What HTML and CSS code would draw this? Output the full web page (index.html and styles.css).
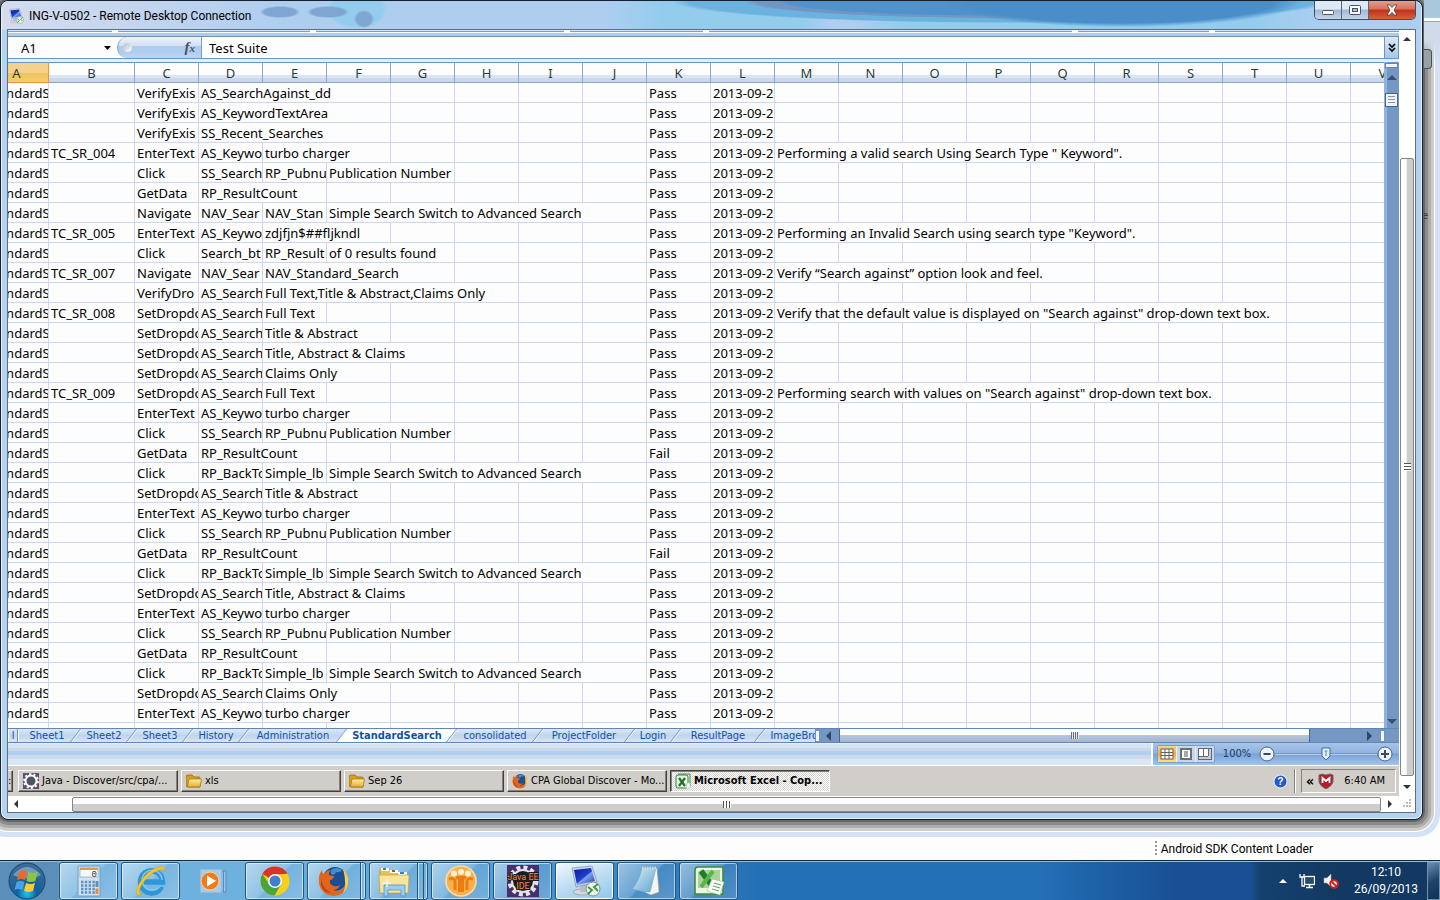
FILE: index.html
```html
<!DOCTYPE html>
<html lang="en">
<head>
<meta charset="utf-8">
<title>ING-V-0502 - Remote Desktop Connection</title>
<link rel="stylesheet" href="styles.css">
</head>
<body>
<svg class="defs" aria-hidden="true">
  <defs>
    <linearGradient id="gFolder" x1="0" y1="0" x2="0" y2="1"><stop offset="0" stop-color="#fff3a8"/><stop offset="1" stop-color="#e3ac2c"/></linearGradient>
    <radialGradient id="gOrb" cx=".5" cy=".85" r=".8"><stop offset="0" stop-color="#18c8f8"/><stop offset=".35" stop-color="#12609c"/><stop offset="1" stop-color="#3c6c98"/></radialGradient>
    <linearGradient id="gScreen" x1="0" y1="0" x2="1" y2="1"><stop offset="0" stop-color="#0a1a9c"/><stop offset=".5" stop-color="#1f3fd0"/><stop offset=".55" stop-color="#7fa4ee"/><stop offset="1" stop-color="#1838b8"/></linearGradient>
    <linearGradient id="gPad" x1="0" y1="0" x2="1" y2="1"><stop offset="0" stop-color="#d8eef8"/><stop offset="1" stop-color="#5fa6cf"/></linearGradient>
  </defs>
  <symbol id="folder" viewBox="0 0 16 16"><path d="M0 4q0-2 2-2h4l2 2h5q1 0 1 1v9H2q-2 0-2-2z" fill="#d9a01f" stroke="#8f6a10" stroke-width=".8"/><path d="M3 6h12.500l-1.500 8H1.500z" fill="url(#gFolder)" stroke="#a87b14" stroke-width=".8"/></symbol>
  <symbol id="firefox" viewBox="0 0 32 32"><circle cx="17" cy="14" r="12" fill="#1d4e93"/><path d="M13 5q6-4 11 0q-2 3-6 2q-1 4-5 2z" fill="#3f8fd0"/><path d="M25 4q6 6 5 14q-2 12-14 13Q3 30 1 18Q0 10 4 5q0 3 2 4q3-4 7-4q-3 3-2 5q2 1 5 1q0 3-4 4q-1 5 4 6q3 1 6-1q-2 5-7 5q7 3 11-3q3-6-1-18z" fill="#e2661a"/><path d="M25 4q6 6 5 14q-1 7-5 10q3-6 2-12q0-6-2-12z" fill="#fbd04a"/><path d="M3 11q0 12 10 17q-8-1-10-8z" fill="#c43a12"/></symbol>
  <symbol id="rdp" viewBox="0 0 32 32"><ellipse cx="14" cy="27" rx="10" ry="3" fill="#d5d8da" stroke="#8b9299" stroke-width=".6"/><path d="M12 20h7l1 7h-9z" fill="#b7bec6"/><path d="M3 3l20-2l5 16l-21 5z" fill="#c9d6e6" stroke="#75879b" stroke-width=".6"/><path d="M5 5l17-2l4 13l-18 4z" fill="url(#gScreen)"/><circle cx="24" cy="24" r="7" fill="#eef2ee" stroke="#85908a"/><path d="M19 22l4 3l-4 4M29 19l-4 3l4 4" fill="none" stroke="#2f9c3c" stroke-width="1.800"/></symbol>
</svg>

<main class="desktop">
  <div class="back-window">
    <div class="back-body"></div>
    <footer class="loader"><span class="grip"></span><span>Android SDK Content Loader</span></footer>
  </div>
  <div class="back-edge"><span class="back-tab"></span><span class="back-link">le</span></div>

  <section class="rdp" aria-label="Remote Desktop Connection">
    <header class="titlebar">
      <svg class="title-icon"><use href="#rdp"/></svg>
      <h1>ING-V-0502 - Remote Desktop Connection</h1>
      <div class="win-buttons">
        <button class="wb min" aria-label="Minimize"><svg viewBox="0 0 12 12"><rect x=".5" y="6.500" width="11" height="4" rx="1" fill="#fff" stroke="#44546c"/></svg></button>
        <button class="wb max" aria-label="Maximize"><svg viewBox="0 0 12 12"><rect x=".5" y="1.500" width="11" height="9" rx="1" fill="#fff" stroke="#44546c"/><rect x="3.500" y="4.500" width="5" height="3" fill="#a6bedd" stroke="#44546c"/></svg></button>
        <button class="wb close" aria-label="Close"><svg viewBox="0 0 12 12"><path d="M1 1h3l2 2.500L8 1h3L8 6l3 5H8L6 8.500L4 11H1l3-5z" fill="#fff" stroke="#5e3030" stroke-width=".8"/></svg></button>
      </div>
    </header>

    <div class="viewport">
      <div class="remote">
        <div class="ribbon-edge"><i></i><i></i><i></i><i></i><i></i><i></i></div>
        <div class="formula-bar">
          <label class="name-box"><input type="text" value="A1" aria-label="Name box"><svg viewBox="0 0 7 4"><path d="M0 0h7L3.500 4z"/></svg></label>
          <div class="fx-area"><span class="fx-dot"></span><button class="fx" aria-label="Insert function">f<small>x</small></button></div>
          <input class="formula" type="text" value="Test Suite" aria-label="Formula">
          <button class="expand" aria-label="Expand formula bar"><svg viewBox="0 0 8 10"><path d="M1 1l3 3l3-3M1 5l3 3l3-3" fill="none" stroke="#000" stroke-width="1.700"/></svg></button>
        </div>
        <div class="grid-area">
          <div class="sheet"><table><colgroup id="cols"></colgroup><thead><tr id="head"></tr></thead><tbody id="rows"></tbody></table></div>
          <div class="xl-vscroll"><span class="split"></span><svg class="arr" viewBox="0 0 10 5"><path d="M0 5h10L5 0z"/></svg><span class="xl-vthumb"></span><svg class="arr end" viewBox="0 0 10 5"><path d="M0 0h10L5 5z"/></svg></div>
        </div>
        <div class="tab-row">
          <nav class="tabs" aria-label="Sheets">
            <button class="tab w10">l</button><button class="tab w58">Sheet1</button><button class="tab w56">Sheet2</button><button class="tab w56">Sheet3</button><button class="tab w56">History</button><button class="tab w98">Administration</button><button class="tab w110 active">StandardSearch</button><button class="tab w86">consolidated</button><button class="tab w92">ProjectFolder</button><button class="tab w46">Login</button><button class="tab w84">ResultPage</button><button class="tab w92">ImageBrowser</button>
          </nav>
          <div class="xl-hscroll"><span class="vsplit"></span><svg class="side" viewBox="0 0 5 10"><path d="M5 0v10L0 5z"/></svg><span class="xl-hthumb"><i></i></span><span class="xl-htrack"></span><svg class="side" viewBox="0 0 5 10"><path d="M0 0v10l5-5z"/></svg><span class="vsplit"></span></div>
        </div>
        <div class="status">
          <div class="status-left"></div>
          <div class="status-right">
            <div class="views">
              <button class="on" aria-label="Normal"><svg viewBox="0 0 14 12"><rect x="1" y="1" width="12" height="10" fill="#fff" stroke="#66615a"/><path d="M1 4.500h12M1 7.500h12M5 1v10M9 1v10" stroke="#66615a"/></svg></button>
              <button aria-label="Page layout"><svg viewBox="0 0 14 12"><rect x="1" y="0" width="12" height="12" fill="#6c7077"/><rect x="3" y="2" width="8" height="8" fill="#fff"/><path d="M5 4h4M5 6h4M5 8h4" stroke="#555"/></svg></button>
              <button aria-label="Page break"><svg viewBox="0 0 14 12"><rect x=".5" y=".5" width="13" height="11" fill="#c7cbd2" stroke="#62666e"/><rect x="1" y="1" width="4" height="7" fill="#fff"/><rect x="6" y="1" width="4" height="7" fill="#fff"/><path d="M5.500 1v7M10.500 1v7M1 8.500h9" stroke="#62666e"/></svg></button>
            </div>
            <span class="zoom-text">100%</span>
            <button class="zoom-btn" aria-label="Zoom out"><svg viewBox="0 0 16 16"><circle cx="8" cy="8" r="7" fill="#eef3fa" stroke="#44658f"/><path d="M4.500 8h7" stroke="#3a4a60" stroke-width="2"/></svg></button>
            <span class="zoom-track"><svg viewBox="0 0 10 14"><path d="M1 1h8v8l-4 4l-4-4z" fill="#e6eefa" stroke="#3f6aa5"/><path d="M3.500 4h3M5 4v5" stroke="#5b83bb"/></svg></span>
            <button class="zoom-btn" aria-label="Zoom in"><svg viewBox="0 0 16 16"><circle cx="8" cy="8" r="7" fill="#eef3fa" stroke="#44658f"/><path d="M4 8h8M8 4v8" stroke="#3a4a60" stroke-width="2"/></svg></button>
          </div>
        </div>
        <div class="xp-bar">
          <button class="xp-btn stub" aria-label="Window">:</button>
          <button class="xp-btn"><svg viewBox="0 0 16 16"><rect width="16" height="16" fill="#5b4f78"/><circle cx="8" cy="8" r="5.500" fill="#4b5560" stroke="#fff" stroke-width="2"/><circle cx="8" cy="8" r="7" fill="none" stroke="#fff" stroke-width="1.800" stroke-dasharray="2.200 2.200"/></svg><span>Java - Discover/src/cpa/...</span></button>
          <button class="xp-btn"><svg><use href="#folder"/></svg><span>xls</span></button>
          <button class="xp-btn"><svg><use href="#folder"/></svg><span>Sep 26</span></button>
          <button class="xp-btn"><svg><use href="#firefox"/></svg><span>CPA Global Discover - Mo...</span></button>
          <button class="xp-btn pressed"><svg viewBox="0 0 16 16"><path d="M3 1h12v12" fill="#e8f2e6" stroke="#3f8f46"/><rect x="1" y="2" width="12" height="13" rx="2" fill="#eaf5e8" stroke="#2f8038"/><path d="M4 5l6 8M10 5l-6 8" stroke="#1d7228" stroke-width="2.200"/><path d="M12 10h3v5h-4z" fill="#fff" stroke="#9ab89b" stroke-width=".6"/></svg><span>Microsoft Excel - Cop...</span></button>
          <div class="xp-tray">
            <svg viewBox="0 0 16 16" class="help"><circle cx="8" cy="8" r="7" fill="#2458c8" stroke="#e4ecfa" stroke-width="1.200"/><text x="8" y="12" text-anchor="middle">?</text></svg>
            <div class="xp-clock"><span class="chev">«</span><svg viewBox="0 0 16 16"><path d="M1 2l3-1l4 1l4-1l3 1v7q-1 4-7 7q-6-3-7-7z" fill="#b51d2a" stroke="#6a6a6a"/><path d="M4.500 10V5L8 8l3.500-3v5" fill="none" stroke="#fff" stroke-width="1.800"/></svg><time>6:40 AM</time></div>
          </div>
        </div>
      </div>
      <div class="vscroll"><svg viewBox="0 0 8 4"><path d="M0 4h8L4 0z"/></svg><span class="vthumb"><i></i></span><svg viewBox="0 0 8 4"><path d="M0 0h8L4 4z"/></svg></div>
      <div class="hscroll"><svg viewBox="0 0 4 8"><path d="M4 0v8L0 4z"/></svg><span class="hthumb"><i></i></span><svg viewBox="0 0 4 8"><path d="M0 0v8l4-4z"/></svg></div>
      <div class="corner"><svg viewBox="0 0 10 10"><path d="M7 1h2M4 4h2M7 4h2M1 7h2M4 7h2M7 7h2" stroke="#bbb" stroke-width="2"/></svg></div>
    </div>
  </section>
</main>

<footer class="taskbar">
  <button class="start" aria-label="Start"><svg viewBox="0 0 38 38"><circle cx="19" cy="19" r="18" fill="url(#gOrb)" stroke="#1c4468"/><path d="M5 13q14-16 28 0q-12 7-28 0z" fill="#a9c4da" opacity=".55"/><path d="M11 10q4-3 8-1l-2 9q-4-2-8 0z" fill="#ec6a2c"/><path d="M20.500 10q4 2 9 0l-2 9q-5 2-9 0z" fill="#8cc63c"/><path d="M8.500 20q4-2 8 0l-2 8q-4-2-8 0z" fill="#4aa4e4"/><path d="M18 21q5 2 9 0l-2 8q-5 2-9 0z" fill="#fccb3a"/></svg></button>
  <button class="app" aria-label="Calculator"><svg viewBox="0 0 32 32"><rect x="5" y="1" width="22" height="30" rx="1" fill="#cfe2f2" stroke="#6e9cc4"/><rect x="7" y="3" width="18" height="9" fill="#f3f8fc" stroke="#8a9aa8" stroke-width=".6"/><path d="M7 4h18" stroke="#e8983a" stroke-width="2"/><text x="24" y="11.500" text-anchor="end" class="calc">0</text><path d="M8 17h14M8 20.500h14M8 24h14M8 27.500h14" stroke="#5f8fc0" stroke-width="2.400" stroke-dasharray="2.400 1.400"/><rect x="22.500" y="16" width="3" height="6" fill="#5f8fc0"/><rect x="22.500" y="23.500" width="3" height="5.500" fill="#f08c24"/></svg></button>
  <button class="app" aria-label="Internet Explorer"><svg viewBox="0 0 32 32"><path d="M26.500 21.500A11 11 0 1 1 27.500 17H9" fill="none" stroke="#2f97d8" stroke-width="5.500"/><path d="M25.500 20.500A10 10 0 1 1 27 15" fill="none" stroke="#7ccaf2" stroke-width="1.500"/><path d="M5 30Q-2 30 4 19Q12 5 24 2q7-2 6 5q-1-4-6-2Q13 9 6 21q-4 8 1 8z" fill="#f5c52c" stroke="#d69a10" stroke-width=".5"/></svg></button>
  <button class="app bare" aria-label="Media Player"><svg viewBox="0 0 32 32"><path d="M24 6h5v21h-5z" fill="#9cc6e6" stroke="#4f8fc4"/><path d="M26.500 6v21" stroke="#4f8fc4"/><rect x="3" y="4" width="22" height="24" fill="#a4cdea" stroke="#7eaed6"/><circle cx="13" cy="16" r="9" fill="#f07c1c" stroke="#fbd3a4"/><path d="M10 10.500l9 5.500l-9 5.500z" fill="#fff"/></svg></button>
  <button class="app" aria-label="Chrome"><svg viewBox="0 0 32 32"><circle cx="16" cy="16" r="14.500" fill="#f8cf1c"/><path d="M3.400 8.800A14.500 14.500 0 0 1 28.600 8.800L16 9.500L10 13z" fill="#d8342a"/><path d="M3.400 8.800A14.500 14.500 0 0 0 15.500 30.500L22 19.500L16 22.500L10 19z" fill="#4aa33c"/><circle cx="16" cy="16" r="7" fill="#f4f8fa"/><circle cx="16" cy="16" r="5.500" fill="#3f80c8"/></svg></button>
  <button class="app stack" aria-label="Firefox"><svg><use href="#firefox"/></svg></button>
  <button class="app stack two" aria-label="Explorer"><svg viewBox="0 0 32 32"><path d="M2 4h9l2 2h4l2 2h10v20H2z" fill="#e8c35a" stroke="#b08a2a" stroke-width=".7"/><path d="M3 3h8v3H3zM12 5h8v3h-8zM20 7h9v3h-9z" fill="#fff"/><path d="M5 4h3" stroke="#2ba03a" stroke-width="2"/><path d="M14 6h3" stroke="#d8402a" stroke-width="2"/><path d="M22 8h4" stroke="#2f80d0" stroke-width="2"/><path d="M1 10h30l-1 18H2z" fill="#fae49a" stroke="#c9a23a" stroke-width=".7"/><path d="M6 31V20h21v11h-4v-6H10v6z" fill="#9ccdf0" stroke="#4d93cc" stroke-width=".8"/><path d="M9 14v8M5 18h8" stroke="#fff" stroke-width="1.200"/></svg></button>
  <button class="app" aria-label="Team tool"><svg viewBox="0 0 32 32"><circle cx="16" cy="16" r="15" fill="#f6b04c" stroke="#fbdca4" stroke-width="1.600"/><circle cx="9" cy="8.500" r="3" fill="#fff0d0"/><circle cx="16" cy="7" r="3" fill="#fff0d0"/><circle cx="23" cy="8.500" r="3" fill="#fff0d0"/><path d="M4 14q6-2 6 3v8M28 14q-6-2-6 3v8M11 13q5-2 5 1q0-3 5-1M14.500 13v14M17.500 13v14" fill="none" stroke="#ee7c14" stroke-width="3"/></svg></button>
  <button class="app" aria-label="Java EE IDE"><svg viewBox="0 0 32 32"><rect width="32" height="32" fill="#46306a"/><circle cx="16" cy="16" r="13.500" fill="none" stroke="#e6e2ea" stroke-width="4" stroke-dasharray="4 3.070"/><circle cx="16" cy="16" r="11" fill="#1c1a24" stroke="#e6e2ea" stroke-width="2"/><text x="16" y="15" text-anchor="middle" class="java">Java EE</text><text x="16" y="24" text-anchor="middle" class="java">IDE</text></svg></button>
  <button class="app focus" aria-label="Remote Desktop"><svg><use href="#rdp"/></svg></button>
  <button class="app" aria-label="Notepad"><svg viewBox="0 0 32 32"><path d="M25 4l4 20l-2 5h-8z" fill="#a08a5c"/><path d="M11 3h15l2 24l-8 3l-9-4z" fill="#f4f6f4" stroke="#8ba4b0" stroke-width=".6"/><path d="M11 3h14l-6 24q-8 0-18-3q7-8 10-21z" fill="url(#gPad)" stroke="#6fa0bd" stroke-width=".6"/><path d="M11 3h15" stroke="#d5dde0" stroke-width="2.500" stroke-dasharray="1.500 1"/></svg></button>
  <button class="app" aria-label="Excel"><svg viewBox="0 0 32 32"><path d="M5 2h25v27H2V5q0-3 3-3z" fill="#eaf5e4" stroke="#3c8c3a" stroke-width="1.600"/><path d="M7 5h20v18H5V7z" fill="#a8d49c"/><path d="M8 6l12 16" stroke="#1f7a2c" stroke-width="5.500"/><path d="M20 6L8 22" stroke="#5cb446" stroke-width="4"/><path d="M19 14l12 3l-4 13l-13-4z" fill="#fff" stroke="#9fc49a" stroke-width=".7"/><path d="M21 18l7 2M20 21l7 2M19 24l7 2" stroke="#5ba858" stroke-width="1.200"/></svg></button>
  <div class="tray">
    <button aria-label="Show hidden icons"><svg viewBox="0 0 16 16"><path d="M4 10h8L8 6z" fill="#fff"/></svg></button>
    <button aria-label="Network"><svg viewBox="0 0 16 16"><path d="M1 1v3h4V1M3 4v9h3" fill="none" stroke="#fff" stroke-width="1.300"/><rect x="5.500" y="3.500" width="10" height="8" fill="#234a70" stroke="#fff" stroke-width="1.300"/><path d="M10.500 12v2M7 14.500h7" stroke="#fff" stroke-width="1.500"/></svg></button>
    <button aria-label="Volume muted"><svg viewBox="0 0 16 16"><path d="M1 5h3l4-4v13l-4-4H1z" fill="#f2f2f2" stroke="#aaa" stroke-width=".6"/><circle cx="11" cy="11" r="3.800" fill="#fff" stroke="#dc1c1c" stroke-width="2"/><path d="M8.500 8.500l5 5" stroke="#dc1c1c" stroke-width="1.800"/></svg></button>
    <div class="clock"><time>12:10</time><span>26/09/2013</span></div>
    <button class="peek" aria-label="Show desktop"></button>
  </div>
</footer>
<script src="sheet.js"></script>
</body>
</html>
```
FILE: sheet.js
```js
const COLS = 'ABCDEFGHIJKLMNOPQRSTUV'.split('');

const SSW = 'Simple Search Switch to Advanced Search';
const click = { C: 'Click', D: 'SS_Search', E: 'RP_Pubnu', F: ['Publication Number', 2] };
const getData = { C: 'GetData', D: ['RP_ResultCount', 2] };
const back = { C: 'Click', D: 'RP_BackTo', E: 'Simple_lb', F: [SSW, 5] };
const enter = { C: 'EnterText', D: 'AS_Keywo', E: ['turbo charger', 2] };
const drop = (text, span) => ({ C: 'SetDropdo', D: 'AS_Search', E: [text, span] });
const fail = { ...getData, K: 'Fail' };

// A value is plain text, or [text, number of columns it runs over].
const DATA = [
  { C: 'VerifyExis', D: ['AS_SearchAgainst_dd', 3] },
  { C: 'VerifyExis', D: ['AS_KeywordTextArea', 3] },
  { C: 'VerifyExis', D: ['SS_Recent_Searches', 3] },
  { ...enter, B: 'TC_SR_004', M: ['Performing a valid search Using Search Type " Keyword".', 6] },
  click,
  getData,
  { C: 'Navigate', D: 'NAV_Sear', E: 'NAV_Stan', F: [SSW, 5] },
  { B: 'TC_SR_005', C: 'EnterText', D: 'AS_Keywo', E: ['zdjfjn$##fljkndl', 2], M: ['Performing an Invalid Search using search type "Keyword".', 6] },
  { C: 'Click', D: 'Search_bt', E: 'RP_Result', F: ['of 0 results found', 2] },
  { B: 'TC_SR_007', C: 'Navigate', D: 'NAV_Sear', E: ['NAV_Standard_Search', 3], M: ['Verify “Search against” option look and feel.', 5] },
  { C: 'VerifyDro', D: 'AS_Search', E: ['Full Text,Title & Abstract,Claims Only', 4] },
  { ...drop('Full Text', 1), B: 'TC_SR_008', M: ['Verify that the default value is displayed on "Search against" drop-down text box.', 8] },
  drop('Title & Abstract', 2),
  drop('Title, Abstract & Claims', 3),
  drop('Claims Only', 2),
  { ...drop('Full Text', 1), B: 'TC_SR_009', M: ['Performing search with values on "Search against" drop-down text box.', 7] },
  enter, click, fail, back,
  drop('Title & Abstract', 2),
  enter, click, fail, back,
  drop('Title, Abstract & Claims', 3),
  enter, click, getData, back,
  drop('Claims Only', 2),
  enter,
  null
];

const cols = document.getElementById('cols');
const head = document.getElementById('head');
const rows = document.getElementById('rows');

COLS.forEach(name => {
  const col = document.createElement('col');
  col.className = name === 'A' ? 'col-a' : name === 'B' ? 'col-b' : 'col';
  cols.append(col);
  const th = document.createElement('th');
  th.scope = 'col';
  th.textContent = name;
  if (name === 'A') th.className = 'selected';
  head.append(th);
});

DATA.forEach(entry => {
  const row = entry ? { A: 'StandardS', K: 'Pass', L: '2013-09-26', ...entry } : {};
  const tr = document.createElement('tr');
  for (let i = 0; i < COLS.length;) {
    const value = row[COLS[i]] || '';
    const [text, span] = Array.isArray(value) ? value : [value, 1];
    const td = document.createElement('td');
    td.textContent = text;
    td.colSpan = span;
    tr.append(td);
    i += span;
  }
  rows.append(tr);
});
```
FILE: styles.css
```css
* { box-sizing: border-box; }
body { margin: 0; height: 100vh; display: flex; flex-direction: column; overflow: hidden; background: #fff; color: #000; font: 12px/16px Roboto, "Noto Sans", sans-serif; }
button { margin: 0; padding: 0; border: 0; background: none; color: inherit; font: inherit; }
input { margin: 0; padding: 0; border: 0; background: none; color: inherit; font: inherit; min-width: 0; }
svg { display: block; flex: none; }
.defs { position: absolute; width: 0; height: 0; }

/* Desktop and the window behind */
.desktop { position: relative; flex: 1; min-height: 0; overflow: hidden; background: #fdfdfd; }
.back-window { height: 100%; display: flex; flex-direction: column; }
.back-body { flex: 1; }
.loader { height: 22px; display: flex; align-items: center; gap: 4px; padding-right: 127px; justify-content: flex-end; }
.loader .grip { width: 2px; height: 16px; background: repeating-linear-gradient(#9a968e 0 2px, transparent 2px 4px); }
.back-edge { position: absolute; z-index: 2; top: 0; right: 0; width: 16px; height: 240px; background: linear-gradient(#a9c8dc 0 18px, #fff 18px 21px, #9aa5b4 21px 22px, #cfdaea 22px 40px, transparent 70px); }
.back-tab { position: absolute; top: 49px; left: 0; width: 8px; height: 20px; border: 1px solid #46525e; border-left: 0; border-radius: 0 4px 4px 0; background: #9aa0a8; }
.back-link { position: absolute; top: 208px; left: 0; width: 4px; overflow: hidden; direction: rtl; font-size: 11px; color: #532; }

/* Remote desktop window */
.rdp { position: absolute; inset: 0 17px 40px 0; display: flex; flex-direction: column; padding: 0 7px 7px; border: 1px solid #15202e; border-radius: 8px; background: #b4d1f0;
  box-shadow: inset 0 0 0 1px #e8f2fc, 0 0 0 2px #666, 0 0 0 5px #8c8c8c, 0 0 0 8px #adadab, 0 0 0 11px #cfcdc9, 0 0 0 12px #fff, 0 0 0 17px #d5e2f5; }
.titlebar { height: 29px; flex: none; display: flex; align-items: center; gap: 5px; margin: 0 -6px; padding-left: 6px; border-radius: 7px 7px 0 0;
  background:
    radial-gradient(ellipse 20px 6px at 278px 11px, #7fa6d2 80%, transparent),
    radial-gradient(ellipse 21px 6px at 326px 11px, #7fa6d2 80%, transparent),
    radial-gradient(ellipse 10px 9px at 362px 18px, #7fa6d2 75%, transparent),
    radial-gradient(ellipse 30px 20px at 355px 8px, #94ccee 85%, transparent),
    radial-gradient(ellipse 180px 26px at 1120px 0, #4a8ec9 85%, transparent),
    radial-gradient(ellipse 330px 22px at 1000px 0, #4f92cc 65%, #7196c4 68% 75%, #6cb2de 78% 95%, transparent),
    linear-gradient(90deg, #d4dcee 0, #c5d6ee 120px, #aecef0 280px 600px, #94ccee 660px 800px, #aecef0 830px 850px, #94ccee 900px 1250px, #aecef0 1330px); }
.title-icon { width: 16px; height: 16px; }
.titlebar h1 { margin: 0; flex: 1; font-size: 12px; font-weight: 400; line-height: 16px; }
.win-buttons { align-self: flex-start; display: flex; margin-right: 5px; border: 1px solid #3f5168; border-top: 0; border-radius: 0 0 5px 5px; overflow: hidden; }
.wb { width: 27px; height: 18px; display: grid; place-items: center; background: linear-gradient(#dfe9f5 0 45%, #a0b8d6 50%, #c3d6ec); border-right: 1px solid #54677f; }
.wb svg { width: 12px; height: 12px; }
.wb.close { width: 46px; border: 0; background: linear-gradient(#e3a08c 0, #d5705a 45%, #bf3319 50%, #d8603c); }

.viewport { flex: 1; min-height: 0; display: grid; grid-template: minmax(0, 1fr) 16px / minmax(0, 1fr) 16px; background: #fff; box-shadow: 0 0 0 1px #5c6f86; }
.remote { display: flex; flex-direction: column; min-width: 0; min-height: 0; font-family: "DejaVu Sans Condensed", "DejaVu Sans", sans-serif; font-size: 11px; }

/* Remote viewport scroll bars */
.vscroll { display: flex; flex-direction: column; align-items: center; padding: 7px 0 7px; }
.vscroll svg { width: 8px; height: 4px; fill: #333; }
.vthumb { flex: 1; width: 14px; margin: 117px 0 9px; display: grid; place-items: center; border: 1px solid #84868a; border-radius: 2px; background: linear-gradient(90deg, #fdfdfd 0 45%, #cfcdca 48%); }
.vthumb i { width: 7px; height: 8px; background: repeating-linear-gradient(#555 0 1px, #fff 1px 3px); }
.hscroll { display: flex; align-items: center; padding: 0 7px 0 6px; }
.hscroll svg { width: 4px; height: 8px; fill: #333; }
.hthumb { flex: 1; height: 15px; margin: 0 7px 0 54px; display: grid; place-items: center; border: 1px solid #84868a; border-radius: 2px; background: linear-gradient(#fdfdfd 0 45%, #cfcdca 48%); }
.hthumb i { width: 8px; height: 7px; background: repeating-linear-gradient(90deg, #555 0 1px, #fff 1px 3px); }
.corner { display: grid; place-items: end; padding: 3px; }
.corner svg { width: 10px; height: 10px; }

/* Excel: formula bar */
.ribbon-edge { height: 7px; flex: none; display: grid; grid-template-columns: 198fr 254fr 139fr 368fr 137fr 190fr; padding-left: 104px; background: linear-gradient(#d7e6f6 0 1px, #7f9fc0 1px 2px, #f3f8fd 2px 3px, #b4cbe4 3px 6px, #6b93b8 6px); }
.ribbon-edge i { width: 6px; height: 3px; background: #fff; }
.formula-bar { height: 22px; flex: none; display: flex; background: #fdfdfd; font: 13px/20px "Noto Sans", sans-serif; border-bottom: 1px solid #6a96bf; }
.name-box { width: 109px; display: flex; align-items: center; padding: 0 6px 0 13px; }
.name-box input { flex: 1; }
.name-box svg { width: 7px; height: 4px; }
.fx-area { width: 85px; display: flex; align-items: center; justify-content: space-between; padding: 0 6px 0 5px; border: 1px solid #7ba0c8; border-width: 0 1px; border-radius: 11px 0 0 11px; background: linear-gradient(#eef4fb 0, #d3e1f3 40%, #b0cdef 45% 70%, #bed6f3); }
.fx-dot { width: 9px; height: 9px; border-radius: 50%; background: linear-gradient(135deg, #b4bcc8, #fff); }
.fx { font: italic bold 15px/18px "Liberation Serif", serif; color: #4a5260; }
.fx small { font-size: 11px; }
.formula { flex: 1; padding-left: 7px; }
.expand { width: 15px; display: grid; place-items: center; border: 1px solid #6a96bf; border-width: 0 1px; background: linear-gradient(#dce9f8, #a5c6ec); }
.expand svg { width: 8px; height: 10px; }

/* Excel: cells */
.grid-area { flex: 1; min-height: 0; display: flex; margin-top: 3px; box-shadow: 0 -3px #e3edf8; }
.sheet { flex: 1; min-width: 0; overflow: hidden; background: #fdfdfd; }
/* The sheet is scrolled a little to the right, so column A starts off screen. */
.sheet table { width: 1430px; margin-left: -23px; table-layout: fixed; border-collapse: separate; border-spacing: 0; font: 13px/17px "Noto Sans", sans-serif; }
.col-a { width: 64px; }
.col-b { width: 86px; }
.col { width: 64px; }
.sheet th { height: 21px; padding: 2px 0 0; border: 1px solid #85a8cd; border-left: 0; border-top-color: #6a96bf; background: linear-gradient(#fdfdfd 0 62%, #d8e5f4 64% 80%, #cbd6ea 82%); color: #1f4035; font-weight: 400; }
.sheet th.selected { border-color: #f29436; border-top-color: #6a96bf; background: linear-gradient(#f4d28c 0 50%, #f0c25c 55%, #f3cf70); }
.sheet td { height: 20px; padding: 2px 2px 0; border: 1px solid #ccd6ec; border-width: 0 1px 1px 0; overflow: hidden; white-space: nowrap; }
.xl-vscroll { width: 15px; display: flex; flex-direction: column; align-items: center; padding: 1px 0 4px; background: linear-gradient(90deg, #8fb2de 0 3px, #7497c4 3px); }
.xl-vscroll .split { width: 13px; height: 5px; border: 1px solid #5f86b6; background: #f0f5fc; }
.arr { width: 10px; height: 5px; margin-top: 7px; fill: #38506e; }
.arr.end { margin-top: auto; }
.xl-vthumb { width: 13px; height: 14px; margin-top: 13px; border: 1px solid #46648c; background: repeating-linear-gradient(#8a96a8 0 1px, transparent 1px 3px) center / 7px 9px no-repeat, #eef3fa; }

/* Excel: sheet tabs */
.tab-row { height: 15px; flex: none; display: flex; border-top: 1px solid #5f86b6; border-bottom: 1px solid #5f86b6; background: #d4e3f6; }
.tabs { flex: none; width: 807px; display: flex; overflow: hidden; }
.tab { position: relative; isolation: isolate; flex: none; height: 13px; padding-top: 1px; line-height: 12px; color: #15519c; white-space: nowrap; }
.tab::before { content: ""; position: absolute; z-index: -1; inset: 0 0 0 -1px; border-left: 1px solid #6f95c6; box-shadow: inset 1px 0 #fff; background: linear-gradient(#dbe8f8, #c0d5ef 50%, #d6e5f7); transform: skewX(-38deg); }
.tab:first-child::before, .tab:nth-child(2)::before { transform: none; }
.tab.active { font-weight: 700; }
.tab.active::before { background: #fff; }
.w10 { width: 10px; } .w46 { width: 46px; } .w56 { width: 56px; } .w58 { width: 58px; } .w84 { width: 84px; } .w86 { width: 86px; } .w92 { width: 92px; } .w98 { width: 98px; } .w110 { width: 110px; }
.xl-hscroll { flex: 1; display: flex; align-items: center; background: #7497c4; }
.xl-hscroll .side { width: 5px; height: 10px; margin: 0 8px 0 6px; fill: #2e4766; }
.vsplit { width: 5px; height: 12px; border: 1px solid #6d93c4; background: #f3f7fc; }
.xl-hscroll .vsplit:last-child { margin-right: 14px; }
.xl-hthumb { flex: 1; height: 13px; display: grid; place-items: center; border: 1px solid #46648c; border-width: 0 1px; background: linear-gradient(#fff 0 45%, #b4c4da 50%, #a4b6d0); }
.xl-hthumb i { width: 8px; height: 7px; background: repeating-linear-gradient(90deg, #66727f 0 1px, #e4eaf2 1px 2px); }
.xl-htrack { width: 51px; }

/* Excel: status bar */
.status { height: 22px; flex: none; display: flex; background: #fff; }
.status-left { flex: 1; margin-right: 2px; background: linear-gradient(#e4eefa 0 1px, #d5e4f5 1px 5px, #ccd8ea 5px 8px, #b0d0f0 8px 12px, #ccdaec 12px 16px, #d8e6f6 16px); }
.status-right { display: flex; align-items: center; padding: 0 6px 0 4px; background: linear-gradient(#a9c5e8, #8fb3e0 45%, #78a2d6 50%, #a3c4ec); }
.views { display: flex; border: 1px solid #7b9fcb; border-radius: 2px; }
.views button { width: 18px; height: 16px; display: grid; place-items: center; background: #c5d7ee; }
.views button + button { width: 19px; border-left: 1px solid #e6eefa; }
.views .on { background: linear-gradient(#f8d28c, #f0b040 50%, #fbe08c); }
.views svg { width: 14px; height: 12px; }
.zoom-text { width: 44px; text-align: center; color: #1c3a68; }
.zoom-btn svg { width: 16px; height: 16px; }
.zoom-track { width: 102px; height: 14px; display: grid; place-items: center; background: linear-gradient(#5a7fb2, #d5e4f6) center / 100% 2px no-repeat; }
.zoom-track svg { width: 10px; height: 14px; }

/* Remote machine task bar */
.xp-bar { height: 31px; flex: none; display: flex; align-items: center; gap: 3px; padding: 0 3px 0 0; border-top: 1px solid #fff; background: #d1cec9; }
.xp-btn { width: 160px; height: 22px; flex: 0 1 auto; display: flex; align-items: center; gap: 3px; padding-left: 4px; overflow: hidden; white-space: nowrap; border: 1px solid; border-color: #fff #404040 #404040 #fff; box-shadow: inset -1px -1px #85827c; }
.xp-btn svg { width: 16px; height: 16px; }
.xp-btn.stub { width: 5px; margin-right: 2px; padding: 0; border-left: 0; }
.xp-btn.pressed { font-weight: 700; border-color: #404040 #fff #fff #404040; box-shadow: inset 1px 1px #85827c; background: repeating-conic-gradient(#fff 0 25%, #d6d3ce 0 50%) 0 0 / 2px 2px; }
.xp-tray { margin-left: auto; display: flex; align-items: center; gap: 13px; }
.help { width: 15px; height: 15px; }
.help text { font: bold 11px "Liberation Sans", sans-serif; fill: #fff; }
.xp-clock { position: relative; height: 24px; width: 95px; display: flex; align-items: center; justify-content: space-between; padding: 0 10px 0 4px; border: 1px solid; border-color: #85827c #fff #fff #85827c; }
.xp-clock::before { content: ""; position: absolute; left: -8px; top: -1px; width: 2px; height: 24px; background: linear-gradient(90deg, #85827c 50%, #fff 50%); }
.xp-clock svg { width: 16px; height: 16px; margin-right: 6px; }
.chev { font-size: 14px; font-weight: 700; }

/* Local task bar */
.taskbar { height: 40px; flex: none; display: flex; gap: 3px; padding-top: 1px; border-top: 1px solid #0e2a40; box-shadow: inset 0 1px #8fbde0;
  background: linear-gradient(90deg, #5b8fb9 0 58px, #6eb0de 60px 240px, #5fa5d6 430px, #3f8bc8 600px, #2470b4 760px 1040px, #1d60a6 1100px, #194f94 1180px 1250px, #14416f 1260px, #123961 1340px); }
.start { width: 56px; display: grid; place-items: center; padding-right: 2px; }
.start svg { width: 38px; height: 38px; }
.app { position: relative; width: 59px; display: grid; place-items: center; border: 1px solid #1d5684; border-radius: 3px; box-shadow: inset 0 0 0 1px rgba(255, 255, 255, .55); background: linear-gradient(135deg, rgba(255, 255, 255, .5), rgba(255, 255, 255, .25) 48%, rgba(255, 255, 255, .08) 52%, rgba(255, 255, 255, .2)); }
.app svg { width: 32px; height: 32px; }
.app.bare { border: 0; box-shadow: none; background: none; }
.app.focus { background: linear-gradient(160deg, #f2f8fd, #bddcf2 50%, #8fc8ec); box-shadow: inset 0 0 0 1px #fff; }
.app.stack { padding-right: 5px; }
.app.stack::after { content: ""; position: absolute; right: 0; top: 0; bottom: 0; width: 4px; border-left: 1px solid #1d5684; box-shadow: inset 1px 0 rgba(255, 255, 255, .6); }
.app.two { padding-right: 9px; }
.app.two::after { right: 3px; width: 5px; border-right: 1px solid #1d5684; }
.calc { font: 9px "Liberation Mono", monospace; fill: #334; }
.java { font: 9px Roboto, sans-serif; fill: #ff8a1c; stroke: #1c1a24; stroke-width: 2px; paint-order: stroke; }
.tray { margin-left: auto; display: flex; align-items: center; color: #fff; }
.tray button { margin-right: 8px; }
.tray svg { width: 16px; height: 16px; }
.clock { width: 78px; margin-right: 2px; display: flex; flex-direction: column; text-align: center; line-height: 17px; }
.tray .peek { width: 13px; height: 38px; margin: 0; border: 1px solid #6f93b4; background: linear-gradient(150deg, #6d8eac, #1f446c 50%, #123154); }
```
